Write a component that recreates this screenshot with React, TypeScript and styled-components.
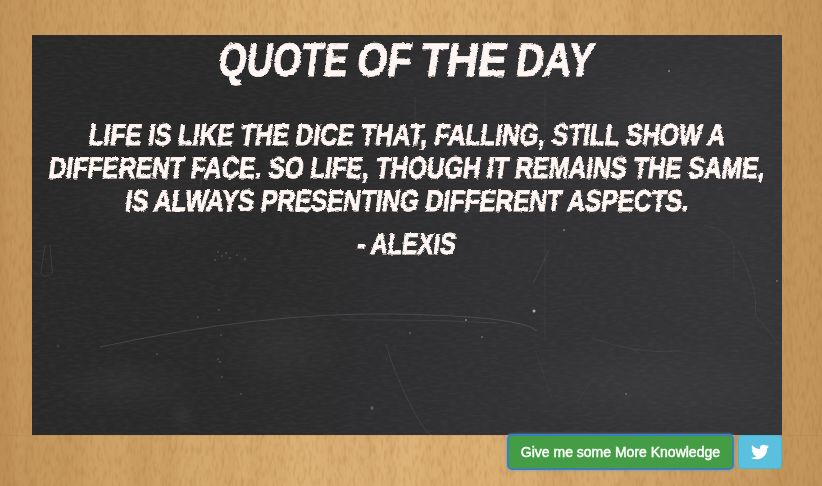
import React, { useLayoutEffect, useRef, useState } from "react";
import styled, { createGlobalStyle } from "styled-components";
import { FaTwitter } from "react-icons/fa";

const GlobalStyle = createGlobalStyle`
  * { box-sizing: border-box; }
  body { margin: 0; background: #d2a267; font-family: "Liberation Sans", Arial, sans-serif; }
`;

const Page = styled.main`
  position: relative;
  width: 822px;
  height: 486px;
  padding: 35px 40px 0 32px;
`;

const Texture = styled.svg`
  position: absolute;
  inset: 0;
  width: 100%;
  height: 100%;
`;

const Board = styled.section`
  position: relative;
  height: 400px;
  color: #fff5f2;
  text-align: center;
`;

const Lettering = styled.div`
  position: relative;
  display: flex;
  flex-direction: column;
  filter: url(#chalk-edge);
`;

const Title = styled.h1`
  display: flex;
  justify-content: center;
  gap: 9px;
  margin: 0 0 33px;
  font-size: 47px;
  line-height: 50px;
  font-weight: 700;
  -webkit-text-stroke: 0.8px #fff5f2;
`;

const TitleWord = styled.span`
  flex: none;
`;

const Quote = styled.blockquote`
  margin: 0;
  font-size: 30px;
  line-height: 33px;
  font-weight: 700;
  -webkit-text-stroke: 0.9px #fff5f2;
`;

const Author = styled.p`
  margin: 10px 0 0;
  font-size: 30px;
  line-height: 33px;
  font-weight: 700;
  -webkit-text-stroke: 0.9px #fff5f2;
`;

const Slot = styled.span<{ $width: number }>`
  display: flex;
  justify-content: center;
  width: ${(p) => p.$width}px;
  margin-inline: auto;
`;

const SlotText = styled.span`
  flex: none;
  white-space: nowrap;
`;

const Actions = styled.div`
  position: relative;
  display: flex;
  justify-content: flex-end;
  gap: 5px;
`;

const Button = styled.button<{ $focused?: boolean }>`
  display: flex;
  align-items: center;
  justify-content: center;
  height: 34px;
  padding: 0 12px;
  border: 1px solid ${(p) => (p.$focused ? "#3c80a8" : "#46b8da")};
  border-radius: 4px;
  background: ${(p) => (p.$focused ? "#449d44" : "#5bc0de")};
  box-shadow: ${(p) => (p.$focused ? "0 0 0 1px #3b7fc4, 0 0 3px 1px #5b97d8" : "none")};
  color: #fff;
  font: 14px "Liberation Sans", Arial, sans-serif;
  -webkit-text-stroke: 0.45px #fff;
  white-space: nowrap;
`;

/* Chalk lettering condensed or stretched to a given width. */
function Chalk({ children, width }: { children: string; width: number }) {
  const ref = useRef<HTMLSpanElement>(null);
  const [scale, setScale] = useState(1);
  useLayoutEffect(() => {
    if (ref.current) setScale(width / ref.current.offsetWidth);
  }, [width]);
  return (
    <Slot $width={width}>
      <SlotText ref={ref} style={{ transform: `scaleX(${scale}) skewX(-9deg)` }}>
        {children}
      </SlotText>
    </Slot>
  );
}

function Wood() {
  return (
    <Texture viewBox="0 0 822 486" aria-hidden="true">
      <defs>
        <linearGradient id="wood">
          <stop offset="0" stopColor="#c0935a" />
          <stop offset=".08" stopColor="#ca9e64" />
          <stop offset=".28" stopColor="#d5aa6f" />
          <stop offset=".42" stopColor="#dfb57b" />
          <stop offset=".68" stopColor="#d9ad72" />
          <stop offset=".88" stopColor="#cb9f65" />
          <stop offset="1" stopColor="#bf935a" />
        </linearGradient>
        <filter id="grain" x="0" y="0" width="100%" height="100%" colorInterpolationFilters="sRGB">
          <feTurbulence type="fractalNoise" baseFrequency=".32 .09" numOctaves="2" seed="7" />
          <feColorMatrix values="0 0 0 0 .61  0 0 0 0 .39  0 0 0 0 .18  1.4 0 0 0 -.64" />
        </filter>
        <filter id="bands" x="0" y="0" width="100%" height="100%" colorInterpolationFilters="sRGB">
          <feTurbulence type="fractalNoise" baseFrequency=".04 .001" numOctaves="3" seed="12" />
          <feColorMatrix values="0 0 0 0 .65  0 0 0 0 .44  0 0 0 0 .22  1.1 0 0 0 -.45" />
        </filter>
      </defs>
      <rect width="822" height="486" fill="url(#wood)" />
      <rect width="822" height="486" filter="url(#bands)" opacity=".4" />
      <rect width="822" height="486" filter="url(#grain)" opacity=".42" />
      <path d="M0 435.5H822" stroke="#986b38" opacity=".1" />
    </Texture>
  );
}

const chalkDust = [
  [186, 217], [190, 221], [194, 218], [198, 223], [205, 220], [183, 225],
  [213, 224], [187, 275], [189, 300], [186, 324], [188, 327], [190, 342],
  [209, 359], [26, 311], [125, 319], [166, 282],
];

function Slate() {
  return (
    <Texture viewBox="0 0 750 400" aria-hidden="true">
      <defs>
        <linearGradient id="slate" x2="1" y2=".08">
          <stop stopColor="#292829" />
          <stop offset=".35" stopColor="#2b2a2b" />
          <stop offset=".65" stopColor="#313032" />
          <stop offset="1" stopColor="#353436" />
        </linearGradient>
        <radialGradient id="dust">
          <stop stopColor="#a5a7ad" stopOpacity=".05" />
          <stop offset="1" stopColor="#a5a7ad" stopOpacity="0" />
        </radialGradient>
        <filter id="slate-grain" x="0" y="0" width="100%" height="100%" colorInterpolationFilters="sRGB">
          <feTurbulence type="fractalNoise" baseFrequency=".12 .4" numOctaves="3" seed="5" />
          <feColorMatrix values="0 0 0 0 .55  0 0 0 0 .55  0 0 0 0 .57  .35 0 0 0 -.13" />
        </filter>
        <filter id="chalk-edge" x="-2%" y="-2%" width="104%" height="104%" colorInterpolationFilters="sRGB">
          <feTurbulence type="fractalNoise" baseFrequency=".22 .45" numOctaves="2" seed="9" result="noise" />
          <feDisplacementMap in="SourceGraphic" in2="noise" scale="3" xChannelSelector="R" yChannelSelector="G" />
        </filter>
      </defs>
      <rect width="750" height="400" fill="url(#slate)" />
      <rect width="750" height="400" filter="url(#slate-grain)" opacity=".42" />
      <g fill="url(#dust)">
        <ellipse cx="248" cy="310" rx="65" ry="45" />
        <ellipse cx="90" cy="350" rx="75" ry="28" />
        <ellipse cx="610" cy="350" rx="150" ry="50" />
        <ellipse cx="640" cy="80" rx="110" ry="55" />
        <ellipse cx="120" cy="165" rx="90" ry="45" />
        <ellipse cx="150" cy="380" rx="13" ry="19" />
      </g>
      <g fill="none" stroke="#b2b1b2" strokeWidth=".8" opacity=".25">
        <path d="M68 312Q230 277 360 279T505 296" />
        <path d="M310 285Q395 284 465 288" opacity=".6" />
        <path d="M354 309Q362 338 378 369T400 400" opacity=".7" />
        <path d="M513 55V305" opacity=".45" />
        <path d="M383 62V103" opacity=".5" />
        <path d="M517 215L501 249" opacity=".7" />
        <path d="M503 315L520 363M558 347L545 368" opacity=".35" />
        <path d="M13 210L9 237Q9 242 14 241Q22 241 20 233L18 210" opacity=".7" />
        <path d="M672 190Q695 194 702 210V246" opacity=".5" />
        <path d="M706 215Q727 254 723 280L746 308" opacity=".5" />
        <path d="M560 303Q600 319 647 316" opacity=".5" />
        <path d="M169 142V150" />
      </g>
      <g fill="#dad9d7">
        {chalkDust.map(([x, y]) => (
          <circle key={`${x}-${y}`} cx={x} cy={y} r=".65" opacity=".4" />
        ))}
        <circle cx="502" cy="276" r="1.5" opacity=".75" />
        <circle cx="434" cy="285" r="1" opacity=".5" />
        <circle cx="450" cy="302" r=".9" opacity=".4" />
        <circle cx="378" cy="298" r=".8" opacity=".5" />
        <circle cx="532" cy="195" r="1.2" opacity=".35" />
        <circle cx="637" cy="36" r=".9" opacity=".6" />
        <circle cx="745" cy="246" r=".8" opacity=".6" />
        <circle cx="594" cy="359" r=".8" opacity=".5" />
      </g>
      <path d="M338 373h4M340 371v4" stroke="#d2d1d1" strokeWidth=".7" opacity=".5" />
    </Texture>
  );
}

export default function App() {
  return (
    <>
      <GlobalStyle />
      <Page>
        <Wood />
        <Board>
          <Slate />
          <Lettering>
            <Title>
              <TitleWord><Chalk width={129}>QUOTE</Chalk></TitleWord>{" "}
              <TitleWord><Chalk width={54}>OF</Chalk></TitleWord>{" "}
              <TitleWord><Chalk width={87}>THE</Chalk></TitleWord>{" "}
              <TitleWord><Chalk width={78}>DAY</Chalk></TitleWord>
            </Title>
            <Quote>
              <Chalk width={636}>LIFE IS LIKE THE DICE THAT, FALLING, STILL SHOW A</Chalk>
              <Chalk width={716}>DIFFERENT FACE. SO LIFE, THOUGH IT REMAINS THE SAME,</Chalk>
              <Chalk width={564}>IS ALWAYS PRESENTING DIFFERENT ASPECTS.</Chalk>
            </Quote>
            <Author><Chalk width={99}>- ALEXIS</Chalk></Author>
          </Lettering>
        </Board>
        <Actions>
          <Button $focused>Give me some More Knowledge</Button>
          <Button aria-label="Share on Twitter"><FaTwitter size={18} /></Button>
        </Actions>
      </Page>
    </>
  );
}
